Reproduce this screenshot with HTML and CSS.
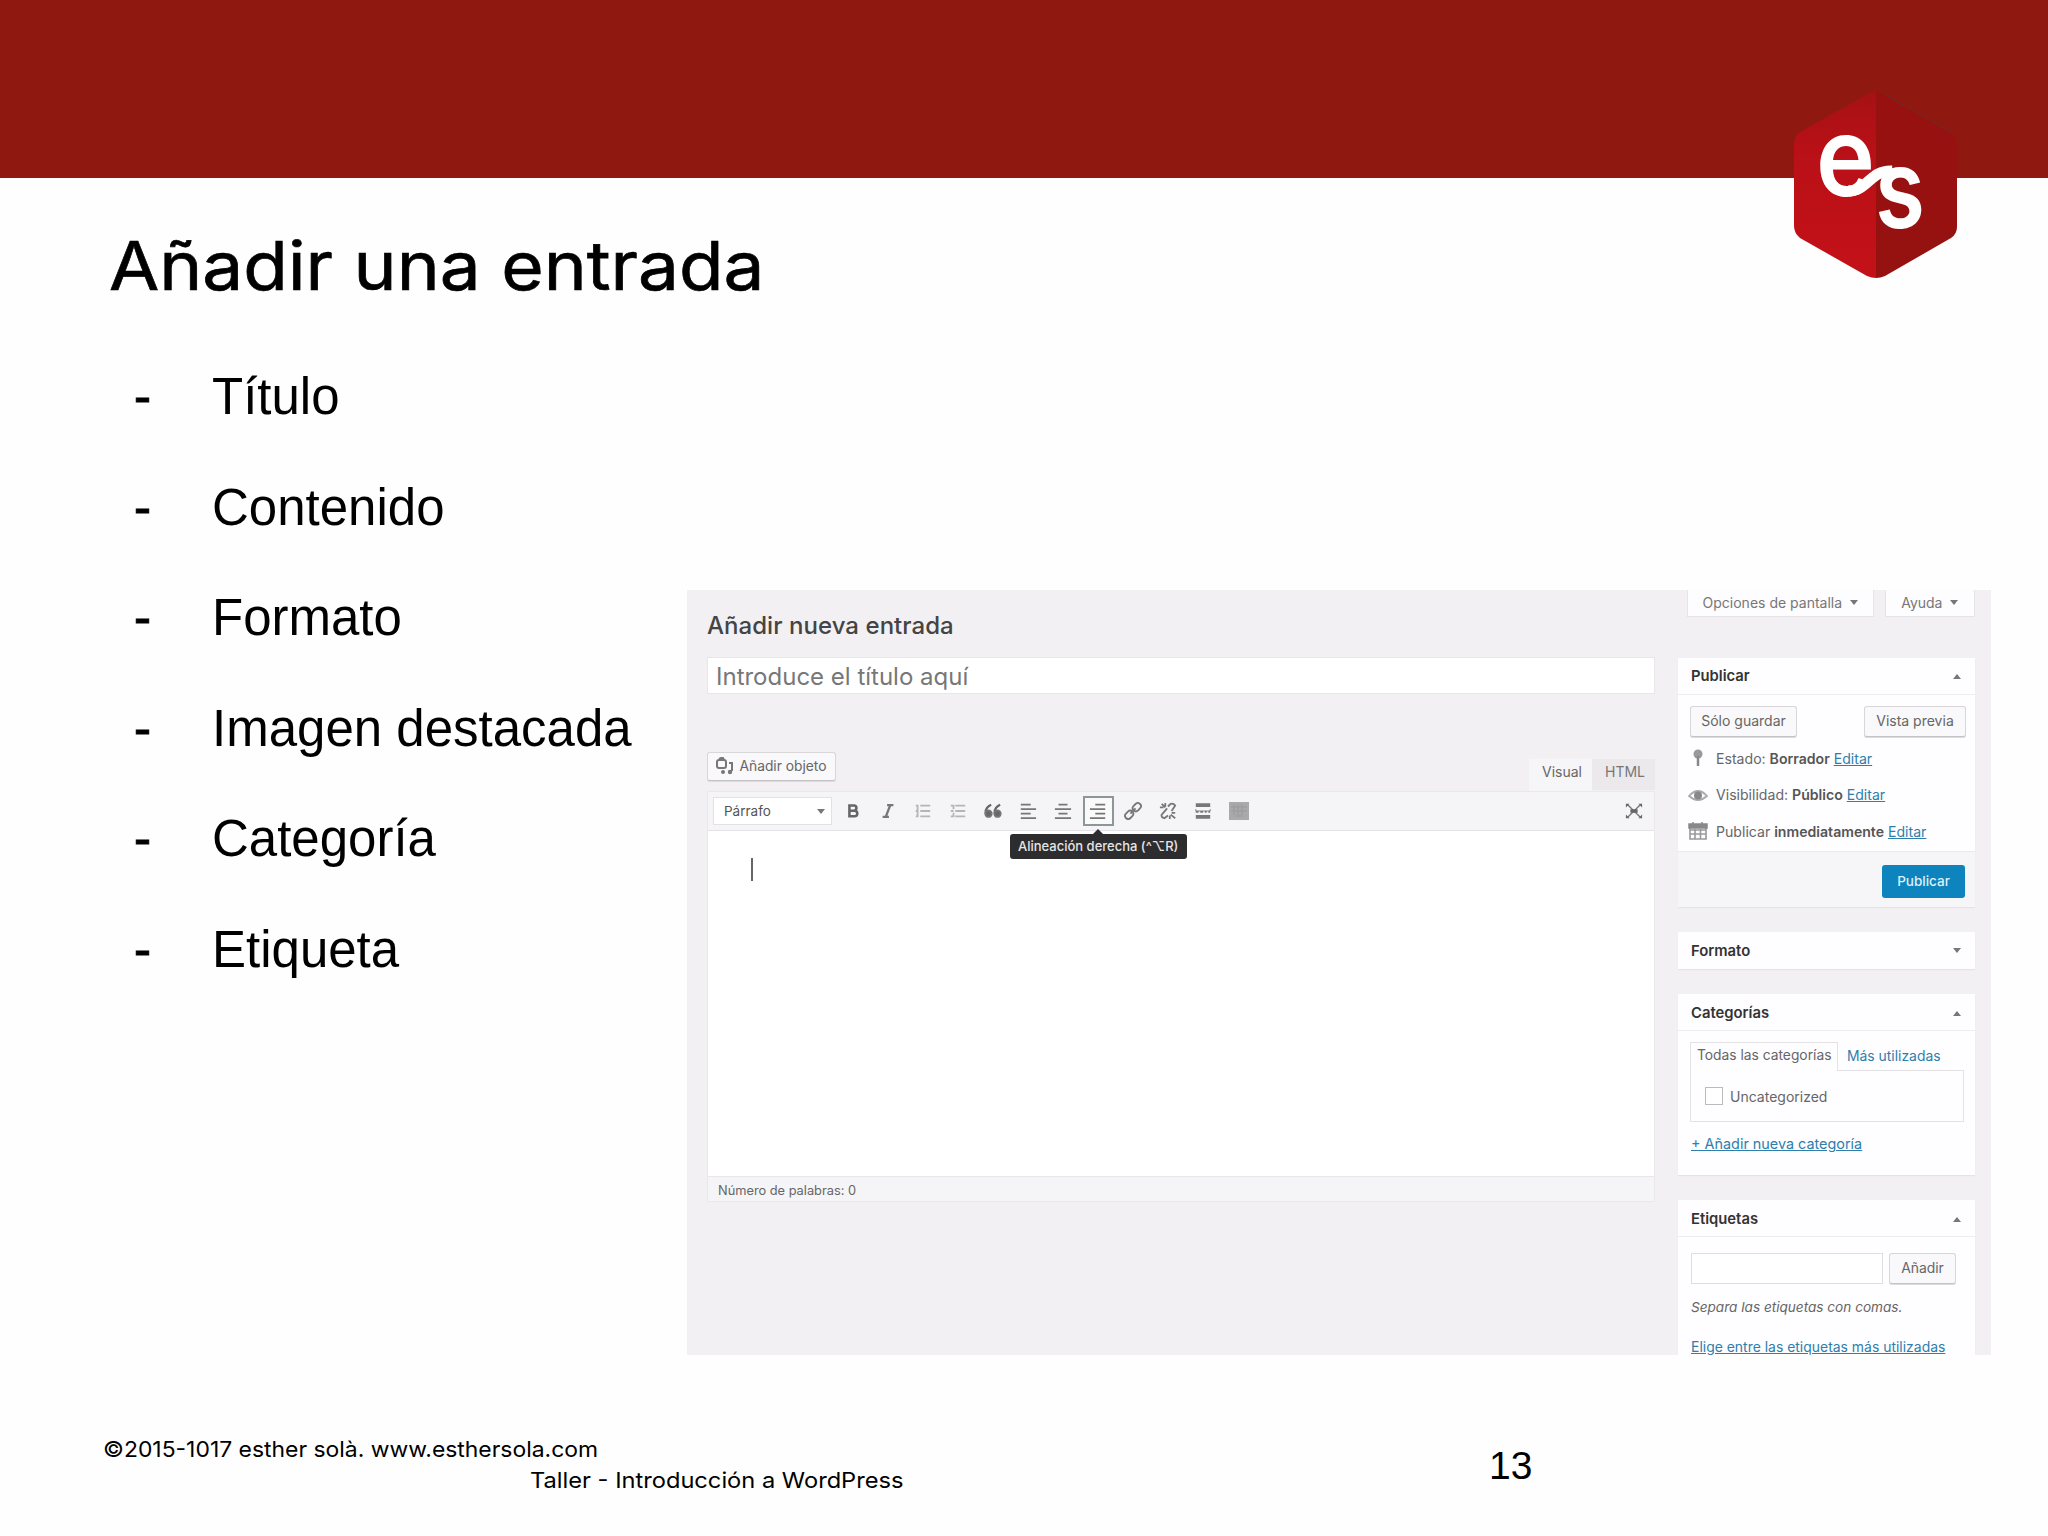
FILE: index.html
```html
<!DOCTYPE html>
<html lang="es">
<head>
<meta charset="utf-8">
<title>Añadir una entrada</title>
<link rel="stylesheet" href="styles.css">
</head>
<body>
<div class="slide">
  <header class="band">
    <svg class="logo" viewBox="0 0 164 190" width="164" height="190">
      <defs>
        <linearGradient id="lf" x1="0" y1="0" x2="0" y2="1"><stop offset="0" stop-color="#a51114"/><stop offset=".35" stop-color="#ba1017"/><stop offset="1" stop-color="#c41118"/></linearGradient>
        <linearGradient id="rt" x1="0" y1="0" x2="0" y2="1"><stop offset="0" stop-color="#981110"/><stop offset="1" stop-color="#951210"/></linearGradient>
        <clipPath id="hex"><path d="M74 4Q81 0 88 4L155 41Q163 46 163 54V137Q163 144 157 148L91 186Q82 190 73 186L6 148Q0 143 0 136V54Q0 46 8 41Z"/></clipPath>
      </defs>
      <g clip-path="url(#hex)">
        <rect width="82" height="190" fill="url(#lf)"/>
        <rect x="82" width="82" height="190" fill="url(#rt)"/>
      </g>
      <path d="M92 5L158 43" stroke="#6e2a25" stroke-width="1" fill="none"/>
      <text class="logo-letter" x="22" y="106" textLength="59" lengthAdjust="spacingAndGlyphs">e</text>
      <text class="logo-letter" x="81" y="138" textLength="50" lengthAdjust="spacingAndGlyphs">s</text>
      <path d="M54 101C74 101 76 80 98 81" fill="none" stroke="#fff" stroke-width="11"/>
    </svg>
  </header>
  <h1 class="title"><span>Añadir una entrada</span></h1>
  <main class="content">
    <ul class="topics">
      <li>Título</li><li>Contenido</li><li>Formato</li><li>Imagen destacada</li><li>Categoría</li><li>Etiqueta</li>
    </ul>
    <section class="wp">
      <div class="editor-col">
        <h2 class="wp-title">Añadir nueva entrada</h2>
        <div class="post-title">Introduce el título aquí</div>
        <div class="media-row">
          <span class="btn media"><svg width="20" height="18" viewBox="0 0 20 18" fill="none" stroke="#777" stroke-width="2"><rect x="2" y="3" width="9" height="8" rx="2"/><path d="M4 2l2-1h2l1 2M14 6h3v8M8 15h1"/><circle cx="8" cy="15" r="1"/><circle cx="15" cy="15" r="1.2"/></svg><span class="t-media">Añadir objeto</span></span>
          <span class="tabs"><span class="tab on">Visual</span><span class="tab">HTML</span></span>
        </div>
        <div class="editor">
          <div class="toolbar">
            <span class="select"><span class="t-par">Párrafo</span><i class="caret down"></i></span>
            <span class="tools">
              <span class="tool"><svg viewBox="0 0 20 20"><path d="M6 4h5a2.7 2.7 0 010 5.6H6zM6 9.6h5.7a3 3 0 010 6.2H6z" fill="none" stroke="#666" stroke-width="2.8"/></svg></span>
              <span class="tool"><svg viewBox="0 0 20 20"><path d="M9 3.500h7M4 16.500h7M12.500 3.500l-5 13" fill="none" stroke="#777" stroke-width="2.600"/></svg></span>
              <span class="tool light"><svg viewBox="0 0 20 20"><path d="M7 4h11M7 10h11M7 16h11M2 4h3M2 10h3M2 16h3M4 4v12"/></svg></span>
              <span class="tool light"><svg viewBox="0 0 20 20"><path d="M7 4h11M7 10h11M7 16h11M2 4h3v4M2 10h3M2 16h3v-4"/></svg></span>
              <span class="tool"><svg viewBox="0 0 20 20"><path d="M8 3Q1 6 2 13M18 3Q11 6 12 13" fill="none" stroke="#666" stroke-width="2.500"/><circle cx="5" cy="13" r="3.600" fill="#666"/><circle cx="15" cy="13" r="3.600" fill="#666"/></svg></span>
              <span class="tool"><svg viewBox="0 0 20 20"><path d="M2 3h11M2 8h17M2 13h11M2 18h17"/></svg></span>
              <span class="tool"><svg viewBox="0 0 20 20"><path d="M5 3h10M1 8h18M5 13h10M1 18h18"/></svg></span>
              <span class="tool active"><svg viewBox="0 0 20 20"><path d="M7 3h11M1 8h17M7 13h11M1 18h17"/></svg><span class="tip">Alineación derecha (^⌥R)</span></span>
              <span class="tool"><svg viewBox="0 0 20 20"><g transform="rotate(-45 10 10)"><rect x="-1" y="6.500" width="10" height="7" rx="3.500"/><rect x="11" y="6.500" width="10" height="7" rx="3.500"/><path d="M6 10h8"/></g></svg></span>
              <span class="tool"><svg viewBox="0 0 20 20"><path d="M10 5l3-3q3-1 5 2l-4 6M10 15l-4 3q-4-1-3-4l6-7M3 2l4 4M1 6h4M7 1v4M13 14l5 4M14 12h4M12 15v4"/></svg></span>
              <span class="tool"><svg viewBox="0 0 20 20"><path d="M2 3.500h16M2 16.500h16" stroke-width="4"/><path d="M2 8v2h16v-2" stroke-width="1"/><path d="M2 11h3M7 11h3M12 11h2M16 11h2"/></svg></span>
              <span class="tool"><svg class="kb" viewBox="0 0 20 20"><rect x="1" y="2" width="18" height="16" fill="#a9a8aa" stroke="#aaa"/><path d="M2 6h16M2 10h16M5 3v11M9 3v11M13 3v11M6 15h8" stroke="#9a999c" stroke-width="1"/></svg></span>
            </span>
            <span class="tool full"><svg viewBox="0 0 20 20"><path d="M3 3l14 14M17 3L3 17" stroke-width="1.500"/><path d="M1 6V2h4zM15 2h4v4zM1 14v4h4zM19 14v4h-4zM6 8h8v4H6z" fill="#666" stroke="none"/></svg></span>
          </div>
          <div class="canvas"><span class="cursor"></span></div>
          <div class="status"><span>Número de palabras: 0</span></div>
        </div>
      </div>
      <aside class="side">
        <div class="screen-meta">
          <span class="meta opts"><span class="t-opc">Opciones de pantalla</span><i class="caret down"></i></span>
          <span class="meta help"><span class="t-ayu">Ayuda</span><i class="caret down"></i></span>
        </div>
        <div class="box publish">
          <div class="box-head"><span>Publicar</span><i class="caret"></i></div>
          <div class="pub-body">
            <div class="pub-btns"><span class="btn save">Sólo guardar</span><span class="btn prev">Vista previa</span></div>
            <div class="pub-row"><svg width="20" height="20" viewBox="0 0 20 20"><circle cx="10" cy="6" r="4.500" fill="#999"/><path d="M10 8v10" stroke="#888" stroke-width="2.500"/></svg><span class="t-est">Estado: <b>Borrador</b> <a>Editar</a></span></div>
            <div class="pub-row"><svg width="20" height="20" viewBox="0 0 20 20"><path d="M1 11Q10 1 19 11Q10 19 1 11Z" fill="none" stroke="#aaa" stroke-width="1.800"/><circle cx="10" cy="10.500" r="4" fill="#888"/></svg><span class="t-vis">Visibilidad: <b>Público</b> <a>Editar</a></span></div>
            <div class="pub-row"><svg width="20" height="20" viewBox="0 0 20 20"><path d="M2 5h16v13H2z M2 9h16M2 13h16M7 8v10M12.500 8v10" fill="none" stroke="#999" stroke-width="1.600"/><path d="M1 3h18v4H1zM5 1v3M14 1v3" fill="#888" stroke="#888" stroke-width="1.500"/></svg><span class="t-pub">Publicar <b>inmediatamente</b> <a>Editar</a></span></div>
          </div>
          <div class="pub-foot"><span class="primary">Publicar</span></div>
        </div>
        <div class="box"><div class="box-head solo"><span>Formato</span><i class="caret down"></i></div></div>
        <div class="box cats">
          <div class="box-head"><span>Categorías</span><i class="caret"></i></div>
          <div class="cat-body">
            <div class="cat-tabs"><span class="cat-tab"><span>Todas las categorías</span></span><a class="most">Más utilizadas</a></div>
            <div class="cat-list"><span class="check"></span><span class="t-unc">Uncategorized</span></div>
            <a class="add">+ Añadir nueva categoría</a>
          </div>
        </div>
        <div class="box tags">
          <div class="box-head"><span>Etiquetas</span><i class="caret"></i></div>
          <div class="tag-body">
            <div class="tag-row"><span class="tag-input"></span><span class="btn tag-btn">Añadir</span></div>
            <em class="hint">Separa las etiquetas con comas.</em>
            <a class="choose">Elige entre las etiquetas más utilizadas</a>
          </div>
        </div>
      </aside>
    </section>
  </main>
  <footer class="foot">
    <div class="credits"><div class="copy"><span>©2015-1017 esther solà. www.esthersola.com</span></div><div class="course"><span>Taller - Introducción a WordPress</span></div></div>
    <div class="page">13</div>
  </footer>
</div>
</body>
</html>
```
FILE: styles.css
```css
* { box-sizing: border-box; }
body { margin: 0; background: #fefefe; color: #000; }
.slide { width: 2048px; height: 1536px; overflow: hidden; display: flex; flex-direction: column; font-family: "Liberation Sans", Arial, sans-serif; }
.band { height: 178px; flex: none; background: #8f1811; position: relative; }
.logo { position: absolute; left: 1794px; top: 90px; }
.logo-letter { font: 600 110px Inter, sans-serif; fill: #fff; }
.title { margin: 0; height: 180px; flex: none; padding: 50px 0 0 109px; font: 400 67px/76px Inter, sans-serif; -webkit-text-stroke: .7px #000; white-space: nowrap; }
.title span, .copy span, .course span { display: inline-block; transform-origin: 0 50%; }
.title span { transform: scaleX(1.088); }
.copy span { transform: scaleX(1.041); }
.course span { transform: scaleX(1.075); }
.content { display: flex; height: 997px; flex: none; }
.topics { list-style: none; margin: 0; padding: 1px 0 0 134px; width: 687px; flex: none; font-size: 51px; line-height: 76px; white-space: nowrap; }
.topics li { height: 110.5px; display: flex; }
.topics li::before { content: "-"; width: 78px; flex: none; -webkit-text-stroke: 1px #000; }
.wp { width: 1304px; height: 765px; margin-top: 232px; background: #f2f0f3; display: flex; gap: 23px; padding-left: 20px; overflow: hidden; font-family: Inter, sans-serif; font-size: 14px; color: #666; white-space: nowrap; }
.editor-col { width: 948px; flex: none; }
.wp-title { margin: 0; height: 67px; padding-top: 19px; font-size: 24px; line-height: 34px; font-weight: 500; color: #444; letter-spacing: .05px; }
.post-title { height: 37px; border: 1px solid #e8e6e9; background: #fff; padding-left: 8px; font-size: 24px; line-height: 38px; color: #777; }
.media-row { height: 97px; display: flex; justify-content: space-between; align-items: flex-end; }
.btn { display: inline-flex; align-items: center; justify-content: center; background: #f9f8fa; border: 1px solid #d8d6d9; border-bottom-color: #c5c3c6; border-radius: 3px; box-shadow: 0 1px 0 #dcdadd; padding-bottom: 2px; }
.media { width: 129px; height: 29px; gap: 4px; margin-bottom: 10px; padding-right: 1px; font-size: 13.800px; }
.tabs { display: flex; align-items: flex-end; }
.tab { width: 63px; height: 31px; background: #ebe9ec; text-align: center; line-height: 26px; font-size: 14px; color: #777; margin-bottom: 1px; padding-left: 3px; }
.tab.on { background: #f6f5f8; color: #666; height: 32px; margin-bottom: 0; }
.editor { border: 1px solid #eae8eb; height: 411px; background: #fff; }
.toolbar { height: 39px; background: #f5f4f7; border-bottom: 1px solid #e5e3e6; display: flex; align-items: center; padding-left: 5px; }
.select { width: 119px; height: 28px; border: 1px solid #e3e1e4; background: #fff; display: flex; align-items: center; justify-content: space-between; padding: 0 6px 0 10px; font-size: 13.500px; color: #555; }
.caret { border: 4px solid transparent; border-top: 0; border-bottom: 5px solid #777; width: 0; height: 0; flex: none; }
.caret.down { border-bottom: 0; border-top: 5px solid #777; }
.tools { display: flex; gap: 4.100px; margin-left: 5px; }
.tool { width: 31px; height: 30px; display: flex; align-items: center; justify-content: center; }
.tool svg { width: 18px; height: 18px; fill: none; stroke: #777; stroke-width: 2; }
.tool svg.kb { width: 20px; height: 20px; }
.tool.light svg { stroke: #b5b4b7; }
.tool.active { border: 2px solid #8e9798; background: #fafafb; position: relative; }
.full { margin-left: auto; margin-right: 5px; }
.tip { position: absolute; left: -75px; top: 36px; width: 177px; height: 25px; border-radius: 3px; background: #2d2c2f; color: #e6e6e6; font-size: 13px; font-weight: 500; line-height: 25px; text-align: center; z-index: 1; }
.tip::before { content: ""; position: absolute; left: 83px; top: -5px; border: 5px solid transparent; border-top: 0; border-bottom-color: #2d2c2f; }
.canvas { height: 345px; padding: 27px 0 0 43px; }
.cursor { display: block; width: 2px; height: 23px; background: #666; }
.status { height: 25px; background: #f5f4f7; border-top: 1px solid #e8e6e9; padding-left: 10px; font-size: 12.800px; line-height: 27px; }
.side { width: 297px; flex: none; }
.screen-meta { height: 68px; display: flex; gap: 11px; padding-left: 9px; }
.meta { height: 27px; background: #fdfcfe; border: 1px solid #e6e4e7; border-top: 0; display: flex; gap: 8px; justify-content: center; align-items: center; color: #777; padding-bottom: 2px; }
.opts { width: 188px; }
.help { width: 91px; }
.box { background: #fefdff; margin-bottom: 25px; box-shadow: 0 1px 1px #e5e3e6; }
.box-head { height: 37px; border-bottom: 1px solid #eeecef; display: flex; justify-content: space-between; align-items: center; padding: 0 14px 0 13px; font-size: 14.800px; font-weight: 600; color: #333; }
.box-head.solo { border: 0; }
.cats .box-head, .tags .box-head { padding-top: 2px; }
.pub-body { height: 156px; padding: 11px 9px 0 12px; }
.pub-btns { display: flex; justify-content: space-between; height: 34px; }
.save, .prev { height: 31px; width: 107px; }
.prev { width: 102px; }
.pub-row { display: flex; height: 36.600px; align-items: center; gap: 8px; margin-left: -2px; font-size: 14.100px; }
.pub-row b { font-weight: 600; color: #555; }
.wp a { color: #2e7fab; text-decoration: underline; }
.pub-foot { height: 56px; background: #f6f5f8; border-top: 1px solid #ebe9ec; display: flex; justify-content: flex-end; padding: 13px 10px 0 0; }
.primary { width: 83px; height: 33px; border-radius: 3px; background: #0d84bd; color: #dff0fa; line-height: 32px; text-align: center; font-size: 13.500px; font-weight: 500; }
.publish { height: 249px; }
.cats { height: 181px; }
.cat-body { padding: 11px 11px 0 12px; }
.cat-tabs { display: flex; height: 28px; align-items: center; }
.cat-tab { width: 148px; height: 29px; padding: 0 6px; line-height: 25px; border: 1px solid #e4e2e5; border-bottom: 0; background: #fefdff; font-size: 13.800px; position: relative; }
.cats .most { text-decoration: none; margin: -1px 0 0 9px; font-size: 13.900px; }
.cat-list { height: 52px; border: 1px solid #e4e2e5; display: flex; align-items: center; padding-left: 14px; gap: 7px; }
.check { width: 18px; height: 18px; border: 1px solid #bbb; background: #fff; }
.add { display: block; margin: 11px 0 0 1px; line-height: 22px; font-size: 14.400px; }
.tags { height: 200px; }
.tag-body { padding: 16px 13px; }
.tag-row { display: flex; gap: 6px; }
.tag-input { width: 192px; height: 31px; border: 1px solid #dfdde0; background: #fff; }
.tag-btn { width: 67px; height: 31px; font-size: 13.900px; }
.hint { display: block; margin-top: 12px; line-height: 22px; font-size: 13.600px; }
.choose { display: block; margin-top: 18px; line-height: 22px; font-size: 13.950px; }
.foot { display: flex; padding: 79px 0 0 103px; font: 400 22px/31px Inter, sans-serif; white-space: nowrap; }
.credits { width: 1386px; }
.course { padding-left: 427px; }
.page { font: 39px/44px "Liberation Sans", Arial, sans-serif; padding-top: 10px; }
```
